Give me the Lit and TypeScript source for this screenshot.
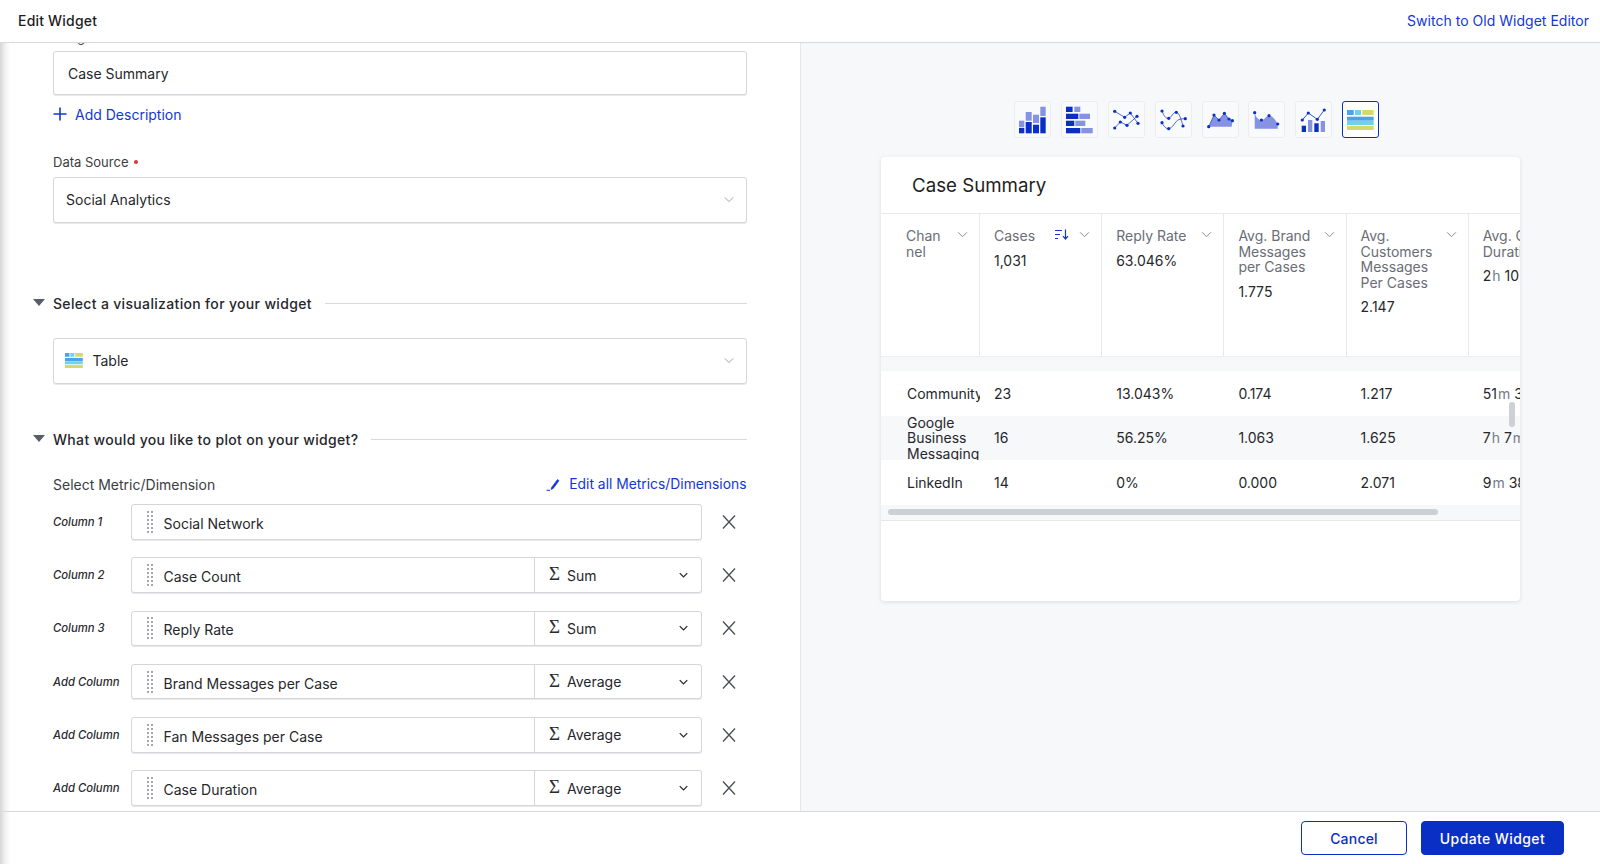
import { LitElement, css, html, svg } from "lit";
import { customElement } from "lit/decorators.js";

const DARK = "#0a2fc4";
const LIGHT = "#8693e2";

const bar = (x: number, y: number, w: number, h: number, fill: string) =>
  svg`<rect x=${x} y=${y} width=${w} height=${h} fill=${fill}></rect>`;
const dots = (pts: number[][]) =>
  pts.map((p) => svg`<circle cx=${p[0]} cy=${p[1]} r="1.6" fill=${DARK}></circle>`);
const poly = (pts: number[][]) => pts.map((p) => p.join(",")).join(" ");

const lineA = [[6.7, 10.3], [16.7, 16.3], [22.3, 12], [30, 22.3]];
const lineB = [[6.7, 27], [12.3, 21], [19, 24.3], [29, 15.3]];
const curveA = [[7, 10], [13.7, 17.3], [21.3, 11.3], [28, 25]];
const curveB = [[7, 21.7], [13.7, 27.7], [30.3, 17.7]];
const area = [[6.7, 25.7], [12, 14], [17, 19], [22.4, 12.3], [27, 18], [30.4, 19.7]];
const wave = [[6.7, 11.7], [13.4, 19], [21, 14.7], [29.7, 23]];
const combo = [[7.3, 19], [13.3, 12], [22.3, 18.3], [29.3, 9]];

const chartIcons = [
  svg`${bar(5, 19.7, 5.3, 6.6, LIGHT)}${bar(5, 27, 5.3, 5.3, DARK)}
    ${bar(11.7, 11, 6, 8.7, LIGHT)}${bar(11.7, 21, 6, 11.3, DARK)}
    ${bar(19, 13.7, 6, 8.3, LIGHT)}${bar(19, 23.7, 6, 8.6, DARK)}
    ${bar(26.3, 5.7, 5.4, 9.3, LIGHT)}${bar(26.3, 16.3, 5.4, 16, DARK)}`,
  svg`${bar(5, 5.7, 6.6, 5.3, DARK)}${bar(13.3, 5.7, 6, 5.3, LIGHT)}
    ${bar(5, 12.7, 12.3, 5.3, DARK)}${bar(18.3, 12.7, 10.7, 5.3, LIGHT)}
    ${bar(5, 19.7, 8.3, 5.3, DARK)}${bar(14.3, 19.7, 10, 5.3, LIGHT)}
    ${bar(5, 27, 14.3, 5.3, DARK)}${bar(20.3, 27, 11.4, 5.3, LIGHT)}`,
  svg`<polyline points=${poly(lineA)} fill="none" stroke=${DARK} stroke-width=".7"></polyline>
    <polyline points=${poly(lineB)} fill="none" stroke=${DARK} stroke-width=".7"></polyline>
    ${dots(lineA)}${dots(lineB)}`,
  svg`<path d="M7 10C9 15 11 18 13.7 17.3C16.5 16.6 18 11 21.3 11.3C24.5 11.6 26.5 20 28 25" fill="none" stroke=${DARK} stroke-width=".7"></path>
    <path d="M7 21.7C8.5 25 11 28 13.7 27.7C18 27.2 20 20 24 18.5C26 17.8 28.5 17.7 30.3 17.7" fill="none" stroke=${DARK} stroke-width=".7"></path>
    ${dots(curveA)}${dots(curveB)}`,
  svg`<polygon points="6.7,25.7 12,14 17,19 22.4,12.3 27,18 30.4,19.7 29.7,25.7" fill=${LIGHT}></polygon>
    <polyline points=${poly(area)} fill="none" stroke=${DARK} stroke-width=".6"></polyline>${dots(area)}`,
  svg`<path d="M6.7 11.7C8 16 10 19 13.4 19C16.5 19 18 14.7 21 14.7C24.5 14.7 27.5 19 29.7 23L29.7 27.7L6.7 27.7Z" fill=${LIGHT}></path>${dots(wave)}`,
  svg`${bar(6.7, 24.7, 4.3, 6.3, DARK)}${bar(13, 19, 4.3, 12, LIGHT)}${bar(19.3, 22.3, 4.4, 8.7, DARK)}${bar(25.7, 20, 4.3, 11, LIGHT)}
    <polyline points=${poly(combo)} fill="none" stroke=${DARK} stroke-width=".8"></polyline>${dots(combo)}`,
  svg`${bar(5, 9, 6.7, 5, "#4ba3ea")}${bar(13, 9, 6, 5, "#70d2e2")}${bar(20.3, 9, 11.4, 5, "#d2da6a")}
    ${bar(5, 15.7, 26.7, 4, "#4ba3ea")}${bar(5, 20, 26.7, 4, "#70d2e2")}${bar(5, 25, 26.7, 4, "#d2da6a")}`,
];

const columns = [
  { label: "Column 1", name: "Social Network", agg: "" },
  { label: "Column 2", name: "Case Count", agg: "Sum" },
  { label: "Column 3", name: "Reply Rate", agg: "Sum" },
  { label: "Add Column", name: "Brand Messages per Case", agg: "Average" },
  { label: "Add Column", name: "Fan Messages per Case", agg: "Average" },
  { label: "Add Column", name: "Case Duration", agg: "Average" },
];

const tableHead = [
  { title: "Chan nel", value: "" },
  { title: "Cases", value: "1,031", sort: true },
  { title: "Reply Rate", value: "63.046%" },
  { title: "Avg. Brand Messages per Cases", value: "1.775" },
  { title: "Avg. Customers Messages Per Cases", value: "2.147" },
  { title: "Avg. Case Duration", value: html`2<i>h</i> 10<i>m</i> 38<i>s</i>` },
];

const tableRows = [
  ["Community", "23", "13.043%", "0.174", "1.217", html`51<i>m</i> 38<i>s</i>`],
  ["Google Business Messaging", "16", "56.25%", "1.063", "1.625", html`7<i>h</i> 7<i>m</i> 12<i>s</i>`],
  ["LinkedIn", "14", "0%", "0.000", "2.071", html`9<i>m</i> 38<i>s</i>`],
];

const chevron = (cls: string) => html`<svg class=${cls} viewBox="0 0 12 8"><path d="M1 1.5L6 6.5L11 1.5" fill="none" stroke="currentColor" stroke-width="1"></path></svg>`;

@customElement("app-root")
export class AppRoot extends LitElement {
  static styles = css`
    :host {
      display: flex;
      flex-direction: column;
      height: 864px;
      overflow: hidden;
      font-family: Inter, "Liberation Sans", sans-serif;
      font-size: 14px;
      color: #26272b;
      background: #fff;
    }
    a { color: #1237d6; text-decoration: none; }

    .top {
      height: 41px;
      padding: 0 11px 1px 18px;
      flex: none;
      display: flex;
      align-items: center;
      justify-content: space-between;
      border-bottom: 1px solid #d8d9dc;
      font-weight: 500;
      font-size: 14px;
      letter-spacing: 0.2px;
      color: #1d1e22;
    }
    .top a { font-weight: 400; letter-spacing: 0.02px; }

    .main { flex: 1; min-height: 0; display: flex; }
    .left {
      width: 801px;
      flex: none;
      box-sizing: border-box;
      overflow: hidden;
      padding: 0 53.5px 0 53px;
      border-right: 1px solid #e6e7ea;
      background: linear-gradient(to right, #d6d6d6, #f0f0f0 5px, #fff 10px);
    }
    .cut { height: 14px; margin-top: -14px; line-height: 16px; font-size: 13px; color: #444; }
    .cut + .input { margin-top: 8px; }
    .input {
      box-sizing: border-box;
      background: #fff;
      border: 1px solid #d4d6da;
      border-radius: 3px;
      box-shadow: 0 1px 0 #e8e9ec;
      display: flex;
      align-items: center;
    }
    .name { height: 44px; padding: 0 14px; }
    .select { height: 46px; padding: 0 12px 2px; justify-content: space-between; }
    .select .chev { width: 10px; height: 7px; color: #8d9096; }
    .select .tbl { display: flex; align-items: center; gap: 9.5px; margin-left: -1px; }
    .select .tbl svg { width: 18px; height: 15px; }
    .add { display: flex; align-items: center; gap: 8px; height: 20px; margin-top: 9px; color: #1237d6; }
    .add svg { width: 14px; height: 14px; }
    .field { margin-top: 30px; margin-bottom: 7px; font-size: 13px; line-height: 16px; color: #3b3d42; display: flex; align-items: center; gap: 6px; }
    .req { width: 4px; height: 4px; border-radius: 50%; background: #d9363e; }
    .heading {
      display: flex;
      align-items: center;
      height: 20px;
      font-weight: 500;
      font-size: 14px;
      letter-spacing: 0.33px;
      position: relative;
      gap: 13px;
    }
    .heading::before {
      content: "";
      position: absolute;
      left: -20px;
      top: 6px;
      border-left: 6px solid transparent;
      border-right: 6px solid transparent;
      border-top: 7px solid #5a5d66;
    }
    .heading::after { content: ""; flex: 1; height: 1px; background: #d8d9dc; }
    .h1 { margin-top: 70px; margin-bottom: 25px; }
    .h2 { margin-top: 45px; margin-bottom: 25px; }
    .metric-top {
      display: flex;
      justify-content: space-between;
      align-items: center;
      height: 20px;
      margin-bottom: 10px;
      color: #3b3d42;
    }
    .metric-top a { display: flex; align-items: center; gap: 8px; font-size: 13.85px; }
    .metric-top svg { width: 15px; height: 13px; }
    .rows { display: flex; flex-direction: column; gap: 17.8px; }
    .row { display: flex; align-items: center; }
    .row .lab { width: 78px; flex: none; font-size: 11.3px; font-style: italic; font-weight: 500; color: #2a2b30; }
    .row .box { width: 571px; height: 35.5px; flex: none; }
    .drag { width: 6px; height: 22px; margin: 0 10.5px 0 15px; flex: none; }
    .nm { flex: 1; padding-top: 3px; }
    .agg {
      width: 167px;
      height: 100%;
      flex: none;
      box-sizing: border-box;
      border-left: 1px solid #d4d6da;
      display: flex;
      align-items: center;
      padding: 0 13px 0 14px;
    }
    .agg .sig { font-family: "Liberation Serif", serif; font-size: 19px; width: 17px; margin-top: -3px; line-height: 1; color: #2a2b30; margin-right: 1px; }
    .agg span.t { flex: 1; }
    .agg .chev { width: 9px; height: 6px; color: #22232a; }
    .agg .chev path { stroke-width: 1.6; }
    .x { width: 14px; height: 14px; margin-left: 20px; color: #4a4c55; flex: none; }

    .right {
      flex: 1;
      background: #f7f8fa;
      display: flex;
      flex-direction: column;
      align-items: center;
      padding-top: 58px;
    }
    .charts { display: flex; gap: 9.8px; margin-left: -7.5px; margin-bottom: 19px; }
    .chart {
      width: 37px;
      height: 37px;
      box-sizing: border-box;
      border: 1px solid #eceded;
      border-radius: 3px;
      background: #f9fafc;
    }
    .chart svg { display: block; width: 37px; height: 37px; margin: -1px; }
    .chart.on { border: 1.5px solid #0a2fc4; background: #fff; }
    .chart.on svg { margin: -1.5px; }

    .card {
      width: 639px;
      height: 444px;
      background: #fff;
      border-radius: 4px;
      box-shadow: 0 1px 4px rgba(30, 35, 60, 0.12);
      overflow: hidden;
      position: relative;
    }
    .card h2 {
      margin: 0;
      height: 57px;
      box-sizing: border-box;
      padding: 17px 0 0 31px;
      font-size: 18.7px;
      line-height: 24px;
      font-weight: 400;
      color: #1d1e22;
      border-bottom: 1px solid #e7e8ea;
    }
    .thead, .tr { display: grid; grid-template-columns: 99px repeat(6, 122.2px); }
    .thead { height: 142px; }
    .th {
      box-sizing: border-box;
      border-right: 1px solid #e8e9ec;
      padding: 14px 11px 0 14px;
      overflow: hidden;
    }
    .th:first-child { padding-left: 25px; padding-right: 11px; }
    .th .cap { display: flex; align-items: flex-start; gap: 6px; color: #6a6d75; line-height: 15.5px; }
    .th .cap span { flex: 1; }
    .th:first-child .cap span { word-break: break-all; }
    .th .chev { width: 11px; height: 7px; color: #787b83; margin-top: 3px; flex: none; }
    .th .sort { width: 14px; height: 11px; flex: none; margin: 1px 4px 0 0; }
    .th .val { margin-top: 9px; line-height: 16px; }
    i { font-style: normal; color: #777a82; margin-left: 1px; }
    .band { height: 14px; background: #f7f8fa; border-top: 1px solid #eeeff1; }
    .tr { height: 44.5px; align-items: center; line-height: 15.5px; }
    .tr.alt { background: #f7f8fa; }
    .td { padding-left: 14px; overflow: hidden; white-space: nowrap; }
    .td:first-child {
      padding-left: 26px;
      white-space: normal;
      height: 44.5px;
      display: flex;
      align-items: center;
    }
    .td:first-child span { display: block; width: 72px; flex: none; }
    .hscroll {
      height: 16px;
      background: #f7f8fa;
      border-bottom: 1px solid #e7e8ea;
      padding: 4px 0 0 7px;
      box-sizing: border-box;
    }
    .hscroll div { width: 550px; height: 6px; border-radius: 3px; background: #cdd0d5; }
    .vscroll {
      position: absolute;
      left: 628px;
      top: 245px;
      width: 6px;
      height: 25px;
      border-radius: 3px;
      background: #cdd0d5;
    }

    .foot {
      height: 52px;
      flex: none;
      display: flex;
      justify-content: flex-end;
      align-items: center;
      gap: 14px;
      padding-right: 36px;
      border-top: 1px solid #d8d9dc;
      background: linear-gradient(to right, #d6d6d6, #f0f0f0 5px, #fff 10px);
    }
    .btn {
      height: 34px;
      box-sizing: border-box;
      border-radius: 4px;
      border: 1px solid #0a2fc4;
      font: 500 14px Inter, "Liberation Sans", sans-serif;
      letter-spacing: 0.4px;
    }
    .cancel { width: 106px; background: #fff; color: #0a2fc4; letter-spacing: 0.2px; }
    .update { width: 143px; background: #0a2fc4; color: #fff; }
  `;

  private renderRow(c: { label: string; name: string; agg: string }) {
    return html`
      <div class="row">
        <div class="lab">${c.label}</div>
        <div class="input box">
          <svg class="drag" viewBox="0 0 6 22" fill="#a4a7ad">
            ${[1, 5, 9, 13, 17, 21].map((y) => svg`<rect x="0" y=${y - 1} width="2" height="2"></rect><rect x="4" y=${y - 1} width="2" height="2"></rect>`)}
          </svg>
          <div class="nm">${c.name}</div>
          ${c.agg
            ? html`<div class="agg"><span class="sig">Σ</span><span class="t">${c.agg}</span>${chevron("chev")}</div>`
            : ""}
        </div>
        <svg class="x" viewBox="0 0 14 14"><path d="M1 0.5L13 13.5M13 0.5L1 13.5" stroke="currentColor" stroke-width="1.3" fill="none"></path></svg>
      </div>
    `;
  }

  protected render(): unknown {
    return html`
      <div class="top"><span>Edit Widget</span><a>Switch to Old Widget Editor</a></div>
      <div class="main">
        <div class="left">
          <div class="cut">Widget Name</div>
          <div class="input name">Case Summary</div>
          <a class="add">
            <svg viewBox="0 0 14 14"><path d="M7 0.5V13.5M0.5 7H13.5" stroke="currentColor" stroke-width="1.6"></path></svg>
            Add Description
          </a>
          <div class="field">Data Source <span class="req"></span></div>
          <div class="input select"><span>Social Analytics</span>${chevron("chev")}</div>
          <div class="heading h1">Select a visualization for your widget</div>
          <div class="input select">
            <span class="tbl">
              <svg viewBox="5 9 27 20" preserveAspectRatio="none">${chartIcons[7]}</svg>
              Table
            </span>
            ${chevron("chev")}
          </div>
          <div class="heading h2">What would you like to plot on your widget?</div>
          <div class="metric-top">
            <span>Select Metric/Dimension</span>
            <a>
              <svg viewBox="0 0 15 13"><path d="M5.5 9.5L11.5 1.5L13 2.7L7 10.7L5 11.5Z" fill="currentColor" stroke="currentColor" stroke-width=".6"></path><path d="M0.5 12.3H4" stroke="currentColor" stroke-width="1"></path></svg>
              Edit all Metrics/Dimensions
            </a>
          </div>
          <div class="rows">${columns.map((c) => this.renderRow(c))}</div>
        </div>
        <div class="right">
          <div class="charts">
            ${chartIcons.map(
              (ic, i) => html`<div class="chart ${i === 7 ? "on" : ""}"><svg viewBox="0 0 37 37">${ic}</svg></div>`
            )}
          </div>
          <div class="card">
            <h2>Case Summary</h2>
            <div class="thead">
              ${tableHead.map(
                (h) => html`
                  <div class="th">
                    <div class="cap">
                      <span>${h.title}</span>
                      ${h.sort
                        ? html`<svg class="sort" viewBox="0 0 14 11"><path d="M0 1.5H7M0 5.5H5M0 9.5H3M10.5 0.5V9.5M8 7.2L10.5 10L13 7.2" fill="none" stroke="#1237d6" stroke-width="1.2"></path></svg>`
                        : ""}
                      ${chevron("chev")}
                    </div>
                    <div class="val">${h.value}</div>
                  </div>
                `
              )}
            </div>
            <div class="band"></div>
            ${tableRows.map(
              (r, i) => html`
                <div class="tr ${i === 1 ? "alt" : ""}">
                  ${r.map((v) => html`<div class="td"><span>${v}</span></div>`)}
                </div>
              `
            )}
            <div class="hscroll"><div></div></div>
            <div class="vscroll"></div>
          </div>
        </div>
      </div>
      <div class="foot">
        <button class="btn cancel">Cancel</button>
        <button class="btn update">Update Widget</button>
      </div>
    `;
  }
}
